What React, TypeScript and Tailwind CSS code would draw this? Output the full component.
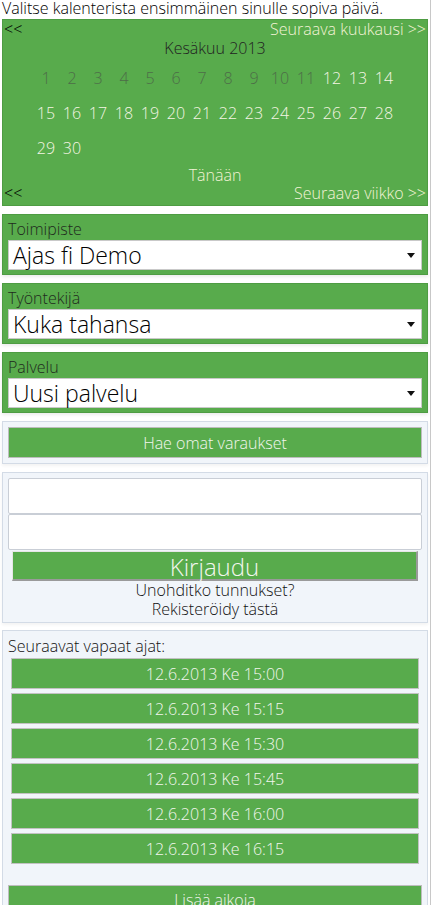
import React from "react";

const days = Array.from({ length: 30 }, (_, i) => i + 1);
const times = ["15:00", "15:15", "15:30", "15:45", "16:00", "16:15"];

const SelectPanel = ({ label, value }: { label: string; value: string }) => (
  <div className="mx-[2px] mt-[8px] border border-[#4e9c43] bg-[#58ab4c] px-[5px] pb-[4px] shadow-[0_2px_3px_rgba(0,0,0,0.08)]">
    <div className="h-[25px] pt-[4px] text-[16px] leading-[20px] text-[#1f2a1d]">{label}</div>
    <div className="flex h-[30px] items-center justify-between border border-[#c9c9c9] bg-white pl-[4px] pr-[6px]">
      <span className="text-[23px] leading-[28px] text-black">{value}</span>
      <svg width="8" height="5" viewBox="0 0 8 5">
        <path d="M0 0h8L4 5z" fill="#111" />
      </svg>
    </div>
  </div>
);

export default function App() {
  return (
    <div
      className="min-h-[905px] w-[431px] border-r border-[#c8c8c8] bg-white font-light"
      style={{ fontFamily: '"Open Sans", "Liberation Sans", sans-serif' }}
    >
      <div className="h-[19px] pl-[2px] text-[16px] leading-[17px] text-black">
        Valitse kalenterista ensimmäinen sinulle sopiva päivä.
      </div>

      {/* kalenteri */}
      <div className="mx-[2px] border border-[#4e9c43] bg-[#58ab4c] pb-[4px]">
        <div className="flex h-[17px] items-center justify-between px-[1px] text-[16px]">
          <span className="text-black">&lt;&lt;</span>
          <span className="text-[#f3f3d6]">Seuraava kuukausi &gt;&gt;</span>
        </div>
        <div className="h-[23px] text-center text-[16px] leading-[23px] text-[#222]">Kesäkuu 2013</div>
        <div className="mx-auto grid w-[364px] grid-cols-14 text-[16px]">
          {days.map((d) => (
            <div
              key={d}
              className={
                "flex h-[35px] items-center justify-center " +
                (d < 12 ? "text-[#4d6d48]" : "text-[#f5f5e4]")
              }
            >
              {d}
            </div>
          ))}
        </div>
        <div className="h-[20px] text-center text-[16px] leading-[20px] text-[#f3f3d6]">Tänään</div>
        <div className="flex h-[16px] items-center justify-between px-[1px] text-[16px]">
          <span className="text-black">&lt;&lt;</span>
          <span className="text-[#f3f3d6]">Seuraava viikko &gt;&gt;</span>
        </div>
      </div>

      <SelectPanel label="Toimipiste" value="Ajas fi Demo" />
      <SelectPanel label="Työntekijä" value="Kuka tahansa" />
      <SelectPanel label="Palvelu" value="Uusi palvelu" />

      {/* omat varaukset */}
      <div className="mx-[2px] mt-[8px] border border-[#d3dbe6] bg-[#f1f5fa] p-[5px] shadow-[0_2px_3px_rgba(0,0,0,0.05)]">
        <button className="flex h-[31px] w-full items-center justify-center border border-[#bdbdbd] bg-[#58ab4c] text-[16px] text-[#f3f6ee]">
          Hae omat varaukset
        </button>
      </div>

      {/* kirjautuminen */}
      <div className="mx-[2px] mt-[8px] border border-[#d3dbe6] bg-[#f1f5fa] px-[5px] pt-[5px] pb-[3px] shadow-[0_2px_3px_rgba(0,0,0,0.05)]">
        <div className="h-[36px] rounded-[2px] border border-[#c9ced6] bg-white" />
        <div className="h-[36px] rounded-[2px] border border-[#c9ced6] bg-white" />
        <button className="mx-[4px] mt-[1px] flex h-[30px] w-[406px] items-center justify-center border-t border-l border-r-2 border-b-2 border-t-[#e6e6e6] border-l-[#e6e6e6] border-r-[#9a9a9a] border-b-[#9a9a9a] bg-[#58ab4c] pt-[3px] text-[24px] leading-[26px] text-[#f3f6ee]">
          Kirjaudu
        </button>
        <div className="text-center text-[16px] leading-[19px] text-[#111]">
          <div>Unohditko tunnukset?</div>
          <div>Rekisteröidy tästä</div>
        </div>
      </div>

      {/* vapaat ajat */}
      <div className="mx-[2px] mt-[7px] border border-[#d3dbe6] bg-[#f1f5fa] px-[5px] pb-[10px]">
        <div className="h-[27px] pt-[5px] text-[16px] leading-[20px] text-[#111]">Seuraavat vapaat ajat:</div>
        <div className="flex flex-col gap-[4px] px-[3px]">
          {times.map((t) => (
            <button
              key={t}
              className="flex h-[31px] w-full items-center justify-center border border-[#c2c2c2] bg-[#58ab4c] text-[16px] text-[#f3f6ee]"
            >
              12.6.2013 Ke {t}
            </button>
          ))}
        </div>
        <button className="mt-[21px] flex h-[30px] w-full items-center justify-center border border-[#bdbdbd] bg-[#58ab4c] text-[16px] text-[#f3f6ee]">
          Lisää aikoja
        </button>
      </div>
    </div>
  );
}
